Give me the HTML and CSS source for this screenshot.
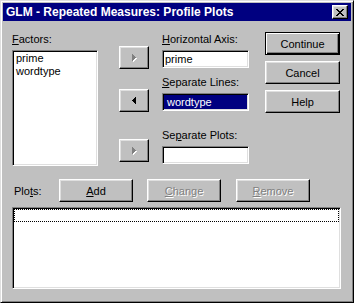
FILE: index.html
```html
<!DOCTYPE html>
<html lang="en">
<head>
    <meta charset="UTF-8">
    <title>GLM - Repeated Measures: Profile Plots</title>
    <link rel="stylesheet" href="styles.css">
</head>
<body>
    <div class="window">
        <div class="titlebar">
            <span class="title">GLM - Repeated Measures: Profile Plots</span>
            <button class="close-btn">
                <svg width="8" height="7" viewBox="0 0 8 7" shape-rendering="crispEdges">
                    <path fill="#000" d="M0 0h2v1H0z M6 0h2v1H6z M1 1h2v1H1z M5 1h2v1H5z M2 2h4v1H2z M3 3h2v1H3z M2 4h4v1H2z M1 5h2v1H1z M5 5h2v1H5z M0 6h2v1H0z M6 6h2v1H6z"/>
                </svg>
            </button>
        </div>
        <div class="dialog-body">
            <div class="top-area">
                <div class="factors-col">
                    <div class="label"><u>F</u>actors:</div>
                    <div class="listbox factors-list">
                        <div class="item">prime</div>
                        <div class="item">wordtype</div>
                    </div>
                </div>
                <div class="arrows-col">
                    <button class="btn arrow-btn disabled">
                        <svg width="5" height="8" viewBox="0 0 5 8" shape-rendering="crispEdges">
                            <path fill="#fff" transform="translate(1 1)" d="M0 0h1v7H0z M1 1h1v5H1z M2 2h1v3H2z M3 3h1v1H3z"/>
                            <path fill="#808080" d="M0 0h1v7H0z M1 1h1v5H1z M2 2h1v3H2z M3 3h1v1H3z"/>
                        </svg>
                    </button>
                    <button class="btn arrow-btn second">
                        <svg width="5" height="8" viewBox="0 0 5 8" shape-rendering="crispEdges">
                            <path fill="#000" d="M3 0h1v7H3z M2 1h1v5H2z M1 2h1v3H1z M0 3h1v1H0z"/>
                        </svg>
                    </button>
                    <button class="btn arrow-btn third disabled">
                        <svg width="5" height="8" viewBox="0 0 5 8" shape-rendering="crispEdges">
                            <path fill="#fff" transform="translate(1 1)" d="M0 0h1v7H0z M1 1h1v5H1z M2 2h1v3H2z M3 3h1v1H3z"/>
                            <path fill="#808080" d="M0 0h1v7H0z M1 1h1v5H1z M2 2h1v3H2z M3 3h1v1H3z"/>
                        </svg>
                    </button>
                </div>
                <div class="targets-col">
                    <div class="label"><u>H</u>orizontal Axis:</div>
                    <div class="field"><span>prime</span></div>
                    <div class="label lines-label"><u>S</u>eparate Lines:</div>
                    <div class="field selected"><span>wordtype</span></div>
                    <div class="label plots-sep-label">Se<u>p</u>arate Plots:</div>
                    <div class="field"><span></span></div>
                </div>
                <div class="buttons-col">
                    <button class="btn push-btn default">Continue</button>
                    <button class="btn push-btn">Cancel</button>
                    <button class="btn push-btn">Help</button>
                </div>
            </div>
            <div class="plots-row">
                <div class="plots-label">Plo<u>t</u>s:</div>
                <button class="btn push-btn add-btn"><span><u>A</u>dd</span></button>
                <button class="btn push-btn change-btn disabled"><span><u>C</u>hange</span></button>
                <button class="btn push-btn remove-btn disabled"><span><u>R</u>emove</span></button>
            </div>
            <div class="listbox plots-list">
                <div class="focus-row"></div>
            </div>
        </div>
    </div>
</body>
</html>
```

FILE: styles.css
```css
body {
    margin: 0;
    background-color: #c0c0c0;
    font-family: "Liberation Sans", Arial, sans-serif;
    font-size: 11px;
    color: #000;
}
.window {
    width: 354px;
    height: 303px;
    box-sizing: border-box;
    padding: 2px;
    background-color: #c0c0c0;
    border: 1px solid;
    border-color: #dfdfdf #000 #000 #dfdfdf;
    box-shadow: inset 1px 1px #fff, inset -1px -1px #808080;
}
.titlebar {
    height: 18px;
    background-color: #000080;
    color: #fff;
    display: flex;
    align-items: center;
    justify-content: space-between;
    padding: 0 3px 0 3px;
}
.title {
    font-weight: bold;
    font-size: 12px;
    white-space: nowrap;
}
.close-btn {
    width: 16px;
    height: 14px;
    padding: 0;
    background-color: #c0c0c0;
    border: 1px solid;
    border-color: #fff #000 #000 #fff;
    box-shadow: inset -1px -1px #808080, inset 1px 1px #dfdfdf;
    box-sizing: border-box;
    display: flex;
    align-items: center;
    justify-content: center;
}
.close-btn svg {
    display: block;
    margin: 0 0 0 -1px;
}
.dialog-body {
    padding-left: 9px;
}
.top-area {
    display: flex;
    align-items: flex-start;
}
.label {
    height: 13px;
    line-height: 13px;
    white-space: nowrap;
}
.listbox {
    background-color: #fff;
    border: 1px solid;
    border-color: #808080 #fff #fff #808080;
    box-shadow: inset 1px 1px #000, inset -1px -1px #dfdfdf;
    box-sizing: border-box;
    padding: 1px;
}
.factors-col {
    width: 86px;
    margin-top: 12px;
}
.factors-list {
    margin-top: 4px;
    height: 116px;
}
.item {
    line-height: 13px;
    padding-left: 2px;
}
.btn {
    font: inherit;
    color: #000;
    background-color: #c0c0c0;
    border: 1px solid;
    border-color: #fff #000 #000 #fff;
    box-shadow: inset -1px -1px #808080, inset 1px 1px #dfdfdf;
    box-sizing: border-box;
    padding: 0;
    display: flex;
    align-items: center;
    justify-content: center;
    white-space: nowrap;
}
.btn svg {
    display: block;
}
.btn.disabled {
    color: #808080;
    text-shadow: 1px 1px 0 #fff;
}
.arrows-col {
    width: 30px;
    margin-left: 21px;
    margin-top: 25px;
    display: flex;
    flex-direction: column;
}
.arrow-btn {
    height: 23px;
    width: 30px;
}
.arrow-btn.second {
    margin-top: 20px;
}
.arrow-btn.third {
    margin-top: 27px;
}
.targets-col {
    width: 87px;
    margin-left: 13px;
    margin-top: 12px;
}
.field {
    margin-top: 4px;
    height: 18px;
    background-color: #fff;
    border: 1px solid;
    border-color: #808080 #fff #fff #808080;
    box-shadow: inset 1px 1px #000, inset -1px -1px #dfdfdf;
    box-sizing: border-box;
    padding: 1px;
}
.field span {
    display: block;
    height: 14px;
    line-height: 14px;
    padding-left: 1px;
}
.field.selected span {
    background-color: #000080;
    color: #fff;
    padding-left: 3px;
}
.lines-label {
    margin-top: 8px;
}
.plots-sep-label {
    margin-top: 18px;
}
.buttons-col {
    width: 75px;
    margin-left: 16px;
    margin-top: 11px;
    display: flex;
    flex-direction: column;
    gap: 6px;
}
.push-btn {
    height: 23px;
    width: 75px;
}
.push-btn.default {
    border-color: #000;
    box-shadow: inset 1px 1px #fff, inset -1px -1px #000, inset -2px -2px #808080;
}
.plots-row {
    display: flex;
    align-items: center;
    margin-top: 13px;
    height: 23px;
}
.plots-label {
    width: 45px;
    padding-left: 2px;
}
.plots-row .push-btn {
    width: 74px;
}
.change-btn {
    margin-left: 14px;
}
.remove-btn {
    margin-left: 15px;
}
.plots-list {
    margin-top: 5px;
    width: 329px;
    height: 82px;
}
.focus-row {
    height: 13px;
    border: 1px dotted #000;
    box-sizing: border-box;
}
```
